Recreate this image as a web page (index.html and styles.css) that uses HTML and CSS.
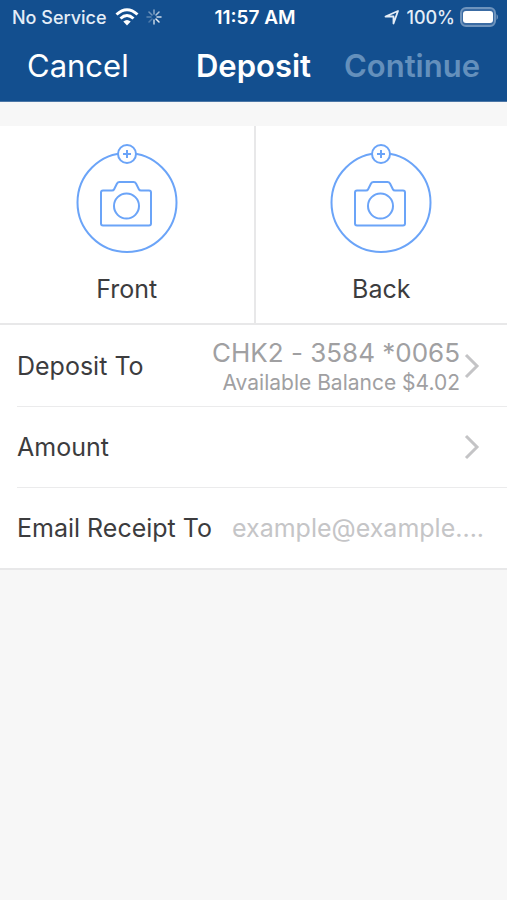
FILE: index.html
```html
<!DOCTYPE html>
<html lang="en">
<head>
<meta charset="utf-8">
<meta name="viewport" content="width=device-width, initial-scale=1">
<title>Deposit</title>
<link rel="stylesheet" href="styles.css">
</head>
<body>
<svg class="defs" aria-hidden="true">
  <symbol id="camera" viewBox="0 0 102 110">
    <g fill="none" stroke="#6ba4f8" stroke-width="2">
      <circle cx="51" cy="58.500" r="49.500"/>
      <circle cx="51" cy="10" r="9" fill="#fff"/>
      <path d="M51 6v8M47 10h8"/>
      <path d="M27 46.500h9q1.500 0 2-1l3-6q.8-1.500 2.500-1.500h14q1.700 0 2.500 1.500l3 6q.5 1 2 1h8q2 0 2 2v31q0 2-2 2H27q-2 0-2-2v-31q0-2 2-2z"/>
      <circle cx="50.500" cy="62" r="12.500"/>
    </g>
  </symbol>
  <symbol id="chevron" viewBox="0 0 16 26">
    <path d="M2 2l11 11L2 24" fill="none" stroke="#c4c4c6" stroke-width="3"/>
  </symbol>
</svg>
<header class="header">
  <div class="status">
    <div class="status-left">
      <span>No Service</span>
      <svg class="wifi" width="24" height="18" viewBox="0 0 24 18" aria-hidden="true">
        <g fill="none" stroke="#fff" stroke-width="3">
          <path d="M1.500 6.500Q12-3 22.500 6.500"/>
          <path d="M5.500 10.500Q12 4.500 18.500 10.500"/>
        </g>
        <path d="M12 17.500l-3.700-4q3.700-3 7.400 0z" fill="#fff"/>
      </svg>
      <svg class="spinner" width="16" height="16" viewBox="0 0 16 16" aria-hidden="true">
        <g stroke="#fff" stroke-width="1.500" stroke-linecap="round">
          <path d="M8 1v4" opacity=".5"/>
          <path d="M13 3l-3 3" opacity=".65"/>
          <path d="M15 8h-4" opacity=".8"/>
          <path d="M13 13l-3-3" opacity=".9"/>
          <path d="M8 15v-4" opacity=".75"/>
          <path d="M3 13l3-3" opacity=".25"/>
          <path d="M1 8h4" opacity=".3"/>
          <path d="M3 3l3 3" opacity=".4"/>
        </g>
      </svg>
    </div>
    <span class="clock">11:57 AM</span>
    <div class="status-right">
      <svg width="16" height="16" viewBox="0 0 16 16" aria-hidden="true">
        <path d="M1.500 7.500L14 2 9.500 14.500V7.500z" fill="none" stroke="#e4edf7" stroke-width="1.800" stroke-linejoin="round"/>
      </svg>
      <span class="percent">100%</span>
      <svg width="38" height="20" viewBox="0 0 38 20" aria-hidden="true">
        <rect x="1" y="1" width="34" height="18" rx="5" fill="#3a6ba3" stroke="#6f94bd" stroke-width="2"/>
        <rect x="3" y="4" width="30" height="12" rx="3" fill="#fff"/>
        <path d="M36.500 7q1.500 1 1.500 3t-1.500 3z" fill="#6f94bd"/>
      </svg>
    </div>
  </div>
  <nav class="nav">
    <button class="nav-button" type="button">Cancel</button>
    <h1 class="title">Deposit</h1>
    <button class="nav-button nav-next" type="button" disabled>Continue</button>
  </nav>
</header>
<main>
  <section class="photos">
    <button class="photo" type="button">
      <svg class="camera" aria-hidden="true"><use href="#camera"/></svg>
      <span>Front</span>
    </button>
    <button class="photo" type="button">
      <svg class="camera" aria-hidden="true"><use href="#camera"/></svg>
      <span>Back</span>
    </button>
  </section>
  <section class="form">
    <button class="row" type="button">
      <span class="label">Deposit To</span>
      <span class="account">
        <span class="account-name">CHK2 - 3584 *0065</span>
        <span class="balance">Available Balance $4.02</span>
      </span>
      <svg class="chevron" aria-hidden="true"><use href="#chevron"/></svg>
    </button>
    <button class="row" type="button">
      <span class="label">Amount</span>
      <svg class="chevron" aria-hidden="true"><use href="#chevron"/></svg>
    </button>
    <div class="row">
      <label class="label" for="email">Email Receipt To</label>
      <input class="email" id="email" type="email" placeholder="example@example....">
    </div>
  </section>
</main>
</body>
</html>
```

FILE: styles.css
```css
* {
  box-sizing: border-box;
}

body {
  margin: 0;
  background: #f7f7f7;
  color: #3c3c3e;
  font-family: Inter, "Liberation Sans", sans-serif;
  font-size: 25px;
  font-weight: 400;
}

button,
input {
  margin: 0;
  padding: 0;
  border: 0;
  background: none;
  color: inherit;
  font: inherit;
}

svg {
  display: block;
  flex: none;
}

.defs {
  position: absolute;
  width: 0;
  height: 0;
}

.header {
  background: #134f8f;
  color: #fff;
  border-bottom: 1px solid #4b76a6;
}

.status {
  display: grid;
  grid-template-columns: 1fr auto 1fr;
  align-items: center;
  height: 34px;
  padding: 0 9px 0 12px;
  font-size: 18px;
  font-weight: 500;
  color: #e4edf7;
}

.status-left,
.status-right {
  display: flex;
  align-items: center;
}

.wifi {
  margin-left: 8px;
}

.spinner {
  margin-left: 7px;
}

.status-right {
  justify-content: flex-end;
}

.percent {
  margin: 0 5px 0 6px;
}

.clock {
  color: #fff;
  font-size: 19px;
  font-weight: 600;
}

.nav {
  display: grid;
  grid-template-columns: 1fr auto 1fr;
  align-items: center;
  height: 67px;
  padding: 0 27px 4px;
  font-size: 31px;
}

.nav-button {
  justify-self: start;
  font-weight: 400;
}

.title {
  margin: 0;
  font-size: 31px;
  font-weight: 600;
}

.nav-next {
  justify-self: end;
  color: #6490bc;
  font-weight: 600;
}

.photos {
  display: grid;
  grid-template-columns: 1fr 1fr;
  margin-top: 24px;
  background: #fff;
  border-bottom: 2px solid #e8e8e9;
}

.photo {
  display: flex;
  flex-direction: column;
  align-items: center;
  gap: 19px;
  padding: 18px 0;
  line-height: 32px;
}

.photo + .photo {
  border-left: 2px solid #e8e8e9;
}

.camera {
  width: 102px;
  height: 110px;
}

.form {
  background: #fff;
  border-bottom: 2px solid #e8e8e9;
}

.row {
  display: flex;
  align-items: center;
  width: calc(100% - 17px);
  height: 81px;
  margin-left: 17px;
  padding-right: 27px;
  text-align: left;
}

.row + .row {
  border-top: 1px solid #ebebec;
}

.label {
  flex: none;
}

.account {
  display: flex;
  flex-direction: column;
  margin-left: auto;
  padding-top: 2px;
  text-align: right;
  color: #a0a0a2;
}

.account-name {
  font-size: 26px;
  line-height: 32px;
  font-variant-ligatures: no-contextual;
}

.balance {
  font-size: 21px;
  line-height: 28px;
}

.chevron {
  width: 16px;
  height: 26px;
  margin-left: 4px;
}

.label + .chevron {
  margin-left: auto;
}

.email {
  flex: 1;
  min-width: 0;
  margin-left: 20px;
  margin-right: -10px;
  outline: none;
}

.email::placeholder {
  color: #c5c5c7;
  opacity: 1;
}
```
